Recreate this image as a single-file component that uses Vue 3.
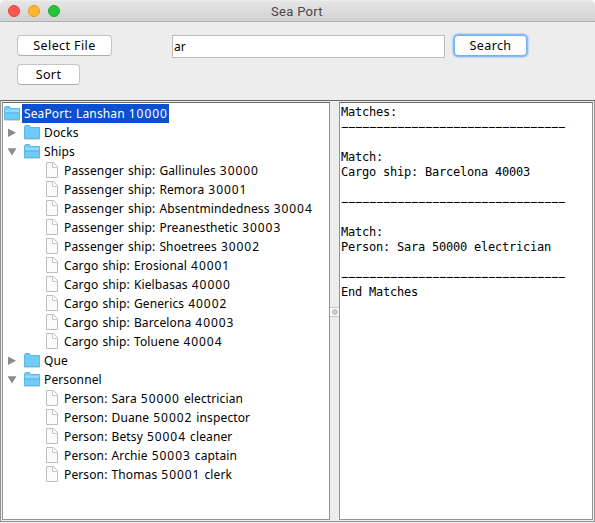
<script setup>
import { ref } from 'vue'

const query = ref('ar')

const rows = [
  { kind: 'open', level: 0, text: 'SeaPort: Lanshan', num: '10000', selected: true },
  { kind: 'closed', level: 1, text: 'Docks' },
  { kind: 'open', level: 1, text: 'Ships' },
  { kind: 'file', level: 2, text: 'Passenger ship: Gallinules', num: '30000' },
  { kind: 'file', level: 2, text: 'Passenger ship: Remora', num: '30001' },
  { kind: 'file', level: 2, text: 'Passenger ship: Absentmindedness', num: '30004' },
  { kind: 'file', level: 2, text: 'Passenger ship: Preanesthetic', num: '30003' },
  { kind: 'file', level: 2, text: 'Passenger ship: Shoetrees', num: '30002' },
  { kind: 'file', level: 2, text: 'Cargo ship: Erosional', num: '40001' },
  { kind: 'file', level: 2, text: 'Cargo ship: Kielbasas', num: '40000' },
  { kind: 'file', level: 2, text: 'Cargo ship: Generics', num: '40002' },
  { kind: 'file', level: 2, text: 'Cargo ship: Barcelona', num: '40003' },
  { kind: 'file', level: 2, text: 'Cargo ship: Toluene', num: '40004' },
  { kind: 'closed', level: 1, text: 'Que' },
  { kind: 'open', level: 1, text: 'Personnel' },
  { kind: 'file', level: 2, text: 'Person: Sara', num: '50000', tail: 'electrician' },
  { kind: 'file', level: 2, text: 'Person: Duane', num: '50002', tail: 'inspector' },
  { kind: 'file', level: 2, text: 'Person: Betsy', num: '50004', tail: 'cleaner' },
  { kind: 'file', level: 2, text: 'Person: Archie', num: '50003', tail: 'captain' },
  { kind: 'file', level: 2, text: 'Person: Thomas', num: '50001', tail: 'clerk' },
]

const rule = '−'.repeat(32)
const output = [
  'Matches:', rule, '', 'Match:', 'Cargo ship: Barcelona 40003', '', rule, '',
  'Match:', 'Person: Sara 50000 electrician', '', rule, 'End Matches',
].join('\n')
</script>

<template>
  <div class="window">
    <header class="titlebar">
      <div class="lights"><i class="red" /><i class="yellow" /><i class="green" /></div>
      <span class="title">Sea Port</span>
    </header>
    <section class="toolbar">
      <button class="btn select">Select File</button>
      <input v-model="query" class="field" type="text">
      <button class="btn search">Search</button>
      <button class="btn sort">Sort</button>
    </section>
    <main class="split">
      <div class="pane tree">
        <div v-for="row in rows" :key="row.text" class="row" :class="'level' + row.level">
          <span v-if="row.level === 1" class="handle">
            <svg v-if="row.kind === 'closed'" width="9" height="10" viewBox="0 0 9 10"><path d="M0 0.500L8 4.800L0 9z" fill="#8b8b8b" /></svg>
            <svg v-else width="9" height="10" viewBox="0 0 9 10"><path d="M-0.500 1.200H8.500L4 8.500z" fill="#8b8b8b" /></svg>
          </span>
          <svg v-if="row.kind === 'file'" class="icon" width="16" height="17" viewBox="0 0 16 17">
            <path d="M0.500 0.500H7.500L11.500 4.500V15.500H0.500z" fill="#fbfbfb" stroke="#bdbdbd" />
            <path d="M6.500 0.500V5.500H11.500" fill="#fff" stroke="#c6c6c6" />
          </svg>
          <svg v-else class="icon" width="16" height="17" viewBox="0 0 16 17">
            <path d="M0.500 3V2.500L1.500 1.500H5.500L6.500 3.500H15.500V14.500H0.500z" fill="#70cbf6" stroke="#5ab8e6" />
            <path v-if="row.kind === 'open'" d="M1 4.500H15V7.500H1z" fill="#93d9f9" />
            <path v-if="row.kind === 'open'" d="M0.500 8H15.500" stroke="#52afe0" />
            <path d="M0 15.500H16" stroke="#d5d9db" />
          </svg>
          <span class="label" :class="{ selected: row.selected }">{{ row.text }}<template v-if="row.num">&nbsp;<span class="num">{{ row.num }}</span></template><template v-if="row.tail">&nbsp;{{ row.tail }}</template></span>
        </div>
      </div>
      <div class="divider"><span class="grip"><i /></span></div>
      <pre class="pane output">{{ output }}</pre>
    </main>
  </div>
</template>

<style>
body { margin: 0; background: #fff; }
</style>

<style scoped>
* { box-sizing: border-box; }
.window { width: 595px; height: 523px; display: flex; flex-direction: column; background: #ededed; border-radius: 5px 5px 0 0; overflow: hidden; font-family: "Noto Sans", sans-serif; font-size: 12px; color: #000; }
.titlebar { height: 22px; flex: none; display: grid; grid-template-columns: 1fr auto 1fr; align-items: center; background: linear-gradient(#f4f4f4 0, #e6e6e6 1px, #d1d1d1 21px); border-bottom: 1px solid #b0b0b0; }
.lights { display: flex; gap: 8px; padding-left: 8px; padding-top: 1px; }
.lights i { width: 12px; height: 12px; border-radius: 50%; border: 1px solid; }
.red { background: #ff5550; border-color: #e2433e !important; }
.yellow { background: #ffb52c; border-color: #e09a22 !important; }
.green { background: #28c53b; border-color: #1aab29 !important; }
.title { font: 13px/18px Roboto, sans-serif; color: #4a4a4a; letter-spacing: .3px; padding: 2px 1px 0 0; }
.toolbar { height: 78px; flex: none; display: grid; grid-template-columns: 155px 273px 1fr; grid-template-rows: 29px 22px; padding: 13px 0 0 17px; align-items: start; }
.btn { height: 21px; padding: 1px 0 0; border: 1px solid #c4c4c4; border-bottom-color: #adadad; border-radius: 4px; background: #fff; font: 12.500px/18px "Noto Sans", sans-serif; letter-spacing: .4px; color: #000; }
.select { width: 95px; }
.sort { width: 63px; }
.search { width: 73px; margin-left: 9px; border: 1px solid #78b0ee; box-shadow: 0 0 0 1px #8bbcf2, 0 0 1px 2px #b9d7f6; }
.field { width: 273px; height: 23px; border: 1px solid #bdbdbd; padding: 0 1px; background: #fff; font: 12px "Noto Sans", sans-serif; letter-spacing: 0; outline: 0; border-radius: 0; color: #000; }
.split { height: 422px; display: grid; grid-template-columns: 328px 9px 254px; padding: 1px; border: 1px solid #939393; border-top-color: #666; background: #ededed; }
.pane { border: 1px solid #939393; border-top-color: #666; background: #fff; min-width: 0; overflow: hidden; }
.tree { padding-top: 1px; }
.row { height: 19px; display: flex; align-items: center; }
.level0 { padding-left: 1px; }
.level1 { padding-left: 5px; }
.level2 { padding-left: 43px; }
.level2 .label { margin-left: 0; }
.handle { width: 16px; height: 10px; display: flex; }
.icon { flex: none; }
.label { height: 19px; line-height: 20px; margin-left: 2px; padding: 0 2px; letter-spacing: .12px; word-spacing: .8px; white-space: nowrap; }
.num { letter-spacing: .95px; }
.selected { background: #0a50d0; color: #fff; padding-right: 1px; }
.divider { display: grid; align-content: start; padding-top: 205px; }
.grip { height: 10px; display: grid; place-items: center; background: #fafafa; border: solid #c9c9c9; border-width: 1px 0; }
.grip i { width: 6px; height: 6px; border-radius: 50%; background: #ccc; border: 1px solid #bcbcbc; }
.output { margin: 0; padding: 2px 0 0 1px; font: 12px/15px "DejaVu Sans Mono", monospace; letter-spacing: -.224px; color: #000; }
</style>
